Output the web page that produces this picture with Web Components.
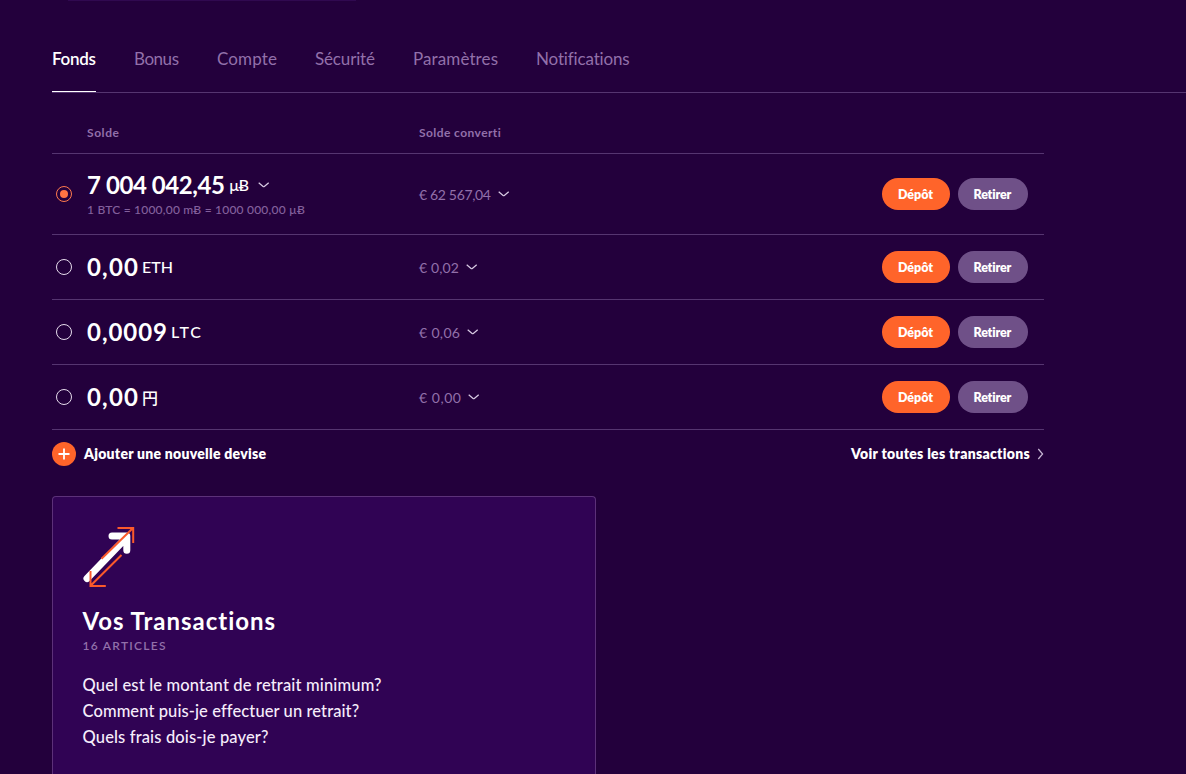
<!DOCTYPE html>
<html lang="fr">
<head>
<meta charset="utf-8">
<title>Fonds</title>
<style>
    :root {
        --bg: #23003c;
        --card: #300354;
        --line: #553570;
        --muted: #9270aa;
        --orange: #ff642a;
        --violet: #6f5088;
    }
    body {
        margin: 0;
        height: 774px;
        overflow: hidden;
        background: var(--bg);
        color: #fff;
        font-family: Lato, "Noto Sans", "Noto Sans CJK JP", sans-serif;
    }
</style>
</head>
<body>
<wallet-page>
    <tab-bar slot="tabs">
        <tab-item active><fit-text width="44">Fonds</fit-text></tab-item>
        <tab-item><fit-text width="45">Bonus</fit-text></tab-item>
        <tab-item><fit-text width="60">Compte</fit-text></tab-item>
        <tab-item><fit-text width="60">Sécurité</fit-text></tab-item>
        <tab-item><fit-text width="85">Paramètres</fit-text></tab-item>
        <tab-item><fit-text width="94">Notifications</fit-text></tab-item>
    </tab-bar>

    <balance-table>
        <fit-text slot="head" width="32">Solde</fit-text>
        <fit-text slot="head" width="82">Solde converti</fit-text>
        <balance-row checked>
            <fit-text slot="amount" width="138">7 004 042,45</fit-text>
            <fit-text slot="unit" width="20">µɃ</fit-text>
            <fit-text slot="note" width="218">1 BTC = 1000,00 mɃ = 1000 000,00 µɃ</fit-text>
            <fit-text slot="converted" width="72">€ 62 567,04</fit-text>
        </balance-row>
        <balance-row>
            <fit-text slot="amount" width="51">0,00</fit-text>
            <fit-text slot="unit" width="31">ETH</fit-text>
            <fit-text slot="converted" width="40">€ 0,02</fit-text>
        </balance-row>
        <balance-row>
            <fit-text slot="amount" width="80">0,0009</fit-text>
            <fit-text slot="unit" width="30">LTC</fit-text>
            <fit-text slot="converted" width="41">€ 0,06</fit-text>
        </balance-row>
        <balance-row>
            <fit-text slot="amount" width="51">0,00</fit-text>
            <fit-text slot="unit" width="16">円</fit-text>
            <fit-text slot="converted" width="42">€ 0,00</fit-text>
        </balance-row>
    </balance-table>

    <table-actions>
        <fit-text slot="add" width="182">Ajouter une nouvelle devise</fit-text>
        <fit-text slot="more" width="179">Voir toutes les transactions</fit-text>
    </table-actions>

    <help-card>
        <fit-text slot="title" width="193">Vos Transactions</fit-text>
        <fit-text slot="count" width="83">16 ARTICLES</fit-text>
        <fit-text width="299">Quel est le montant de retrait minimum?</fit-text>
        <fit-text width="276">Comment puis-je effectuer un retrait?</fit-text>
        <fit-text width="186">Quels frais dois-je payer?</fit-text>
    </help-card>
</wallet-page>

<script>
// --- HELPERS ---

function define(name, html, setup) {
    const template = document.createElement('template');
    template.innerHTML = html;
    customElements.define(name, class extends HTMLElement {
        constructor() {
            super();
            this.attachShadow({ mode: 'open' }).append(template.content.cloneNode(true));
        }
        connectedCallback() {
            if (setup) setup(this, this.shadowRoot);
        }
    });
}


// --- SMALL PIECES ---

define('chevron-down', `
    <style>
        :host { display: block; width: 12px; height: 6px; color: #d9cbe4; }
        svg { display: block; }
    </style>
    <svg width="12" height="6" viewBox="0 0 12 6" fill="none" stroke="currentColor" stroke-width="1.2">
        <path d="M.7 .7L5.1 4.5Q5.7 5 6.3 4.5L10.7 .7"/>
    </svg>`);

define('pill-button', `
    <style>
        :host {
            display: flex; align-items: center; justify-content: center;
            box-sizing: border-box; width: 70px; height: 32px; border-radius: 16px;
            background: var(--violet); font-size: 12.5px; font-weight: 800; padding-right: 1px;
        }
        :host([primary]) { width: 68px; background: var(--orange); }
    </style>
    <slot></slot>`);


// --- TABS ---

define('tab-item', `
    <style>
        :host {
            display: flex; align-items: center; box-sizing: border-box; height: 67px;
            border-bottom: 1px solid transparent; color: var(--muted); font-size: 17px;
        }
        :host([active]) { color: #fff; border-color: #fff; font-weight: 600; }
    </style>
    <slot></slot>`);

define('tab-bar', `
    <style>
        :host { display: flex; gap: 38px; border-bottom: 1px solid var(--line); }
    </style>
    <slot></slot>`);


// --- BALANCES ---

define('balance-row', `
    <style>
        :host {
            display: grid; grid-template-columns: 35px 332px 1fr auto; align-items: center;
            box-sizing: border-box; height: 65px; padding-right: 16px;
            border-bottom: 1px solid var(--line);
        }
        :host([checked]) { height: 81px; }
        .radio {
            display: grid; place-items: center; box-sizing: border-box;
            width: 16px; height: 16px; margin-left: 4px;
            border: 1px solid #e6dcec; border-radius: 50%;
        }
        :host([checked]) .radio { border-color: #ff7a4d; }
        :host([checked]) .radio::after {
            content: ""; width: 8px; height: 8px; border-radius: 50%; background: #ff7443;
        }
        .amount { display: flex; align-items: center; gap: 4px; height: 31px; padding-bottom: 1px; }
        .amount chevron-down { display: none; margin: 0 0 0 5px; }
        :host([checked]) .amount chevron-down { display: block; }
        slot[name=amount] { font-size: 24px; font-weight: 700; }
        slot[name=unit] { font-size: 16px; font-weight: 500; }
        .note { display: none; height: 18px; font-size: 12px; font-weight: 500; line-height: 18px; color: #83609c; }
        :host([checked]) .note { display: block; }
        .converted { display: flex; align-items: center; gap: 7px; color: var(--muted); font-size: 14px; }
        .converted chevron-down { margin-top: -1px; }
        .buttons { display: flex; gap: 8px; }
    </style>
    <span class="radio"></span>
    <div>
        <div class="amount"><slot name="amount"></slot><slot name="unit"></slot><chevron-down></chevron-down></div>
        <div class="note"><slot name="note"></slot></div>
    </div>
    <div class="converted"><slot name="converted"></slot><chevron-down></chevron-down></div>
    <div class="buttons">
        <pill-button primary><fit-text width="35">Dépôt</fit-text></pill-button>
        <pill-button><fit-text width="38">Retirer</fit-text></pill-button>
    </div>`);

define('balance-table', `
    <style>
        :host { display: block; width: 992px; }
        .head {
            display: grid; grid-template-columns: 332px 1fr; align-items: center;
            box-sizing: border-box; height: 61px; padding: 19px 0 1px 35px;
            border-bottom: 1px solid var(--line);
            color: var(--muted); font-size: 12px; font-weight: 700;
        }
    </style>
    <div class="head"><slot name="head"></slot></div>
    <slot></slot>`);

define('table-actions', `
    <style>
        :host {
            display: flex; justify-content: space-between; align-items: center;
            width: 992px; height: 48px; font-size: 14px; font-weight: 800;
        }
        div { display: flex; align-items: center; }
        svg { display: block; }
        slot { display: block; padding-bottom: 2px; }
        .add { gap: 8px; }
        .more { gap: 7px; }
    </style>
    <div class="add">
        <svg width="24" height="24" viewBox="0 0 24 24">
            <circle cx="12" cy="12" r="12" fill="#ff642a"/>
            <path d="M12 6.5v11M6.5 12h11" stroke="#fff" stroke-width="1.8"/>
        </svg>
        <slot name="add"></slot>
    </div>
    <div class="more">
        <slot name="more"></slot>
        <svg width="7" height="12" viewBox="0 0 7 12" fill="none" stroke="#c9b8d6" stroke-width="1.2">
            <path d="M1.3 1L5.6 6L1.3 11"/>
        </svg>
    </div>`);


// --- HELP CARD ---

define('help-card', `
    <style>
        :host {
            display: flex; flex-direction: column; align-items: flex-start;
            box-sizing: border-box; width: 544px; height: 278px; margin-top: 18px; padding: 28px 29px 0;
            border: 1px solid #5c3179; border-bottom: 0; border-radius: 4px 4px 0 0; background: var(--card);
        }
        svg { display: block; flex: none; }
        .title { font-size: 24px; font-weight: 700; line-height: 34px; height: 34px; margin-top: 15px; }
        .count { font-size: 12px; font-weight: 600; line-height: 16px; height: 16px; color: var(--muted); }
        .links { display: flex; flex-direction: column; margin-top: 18px; font-size: 16.5px; font-weight: 500; line-height: 26px; color: #f6edfb; }
        .title, .count, .links { padding-left: .5px; }
    </style>
    <svg width="53" height="64" viewBox="81.5 525 53 64" fill="none">
        <path d="M86.5 578.5L126 537.5M111.5 536H126.3V550.3" stroke="#fff" stroke-width="7" stroke-linecap="round" stroke-linejoin="round"/>
        <path d="M101 558.7L132.5 528M117 528H132.7V543M121 555L90.3 585.5M90 571V586H105.3" stroke="#fb5a2b" stroke-width="2"/>
    </svg>
    <div class="title"><slot name="title"></slot></div>
    <div class="count"><slot name="count"></slot></div>
    <div class="links"><slot></slot></div>`);


// --- PAGE ---

define('wallet-page', `
    <style>
        :host { display: block; padding-left: 52px; }
        .panel-edge { width: 288px; height: 1px; margin-left: 16px; background: #300950; }
        .tabs { margin-top: 24px; }
    </style>
    <div class="panel-edge"></div>
    <div class="tabs"><slot name="tabs"></slot></div>
    <slot></slot>`);

// Spreads its text over a given width by letter spacing
define('fit-text', `
    <style>
        :host { display: block; }
        span { display: block; width: max-content; white-space: pre; }
    </style>
    <span><slot></slot></span>`, (host, root) => {
    const width = Number(host.getAttribute('width'));
    const count = host.textContent.length;
    const natural = root.querySelector('span').getBoundingClientRect().width;
    host.style.width = `${width}px`;
    if (count > 1) host.style.letterSpacing = `${(width - natural) / (count - 1)}px`;
});
</script>
</body>
</html>
